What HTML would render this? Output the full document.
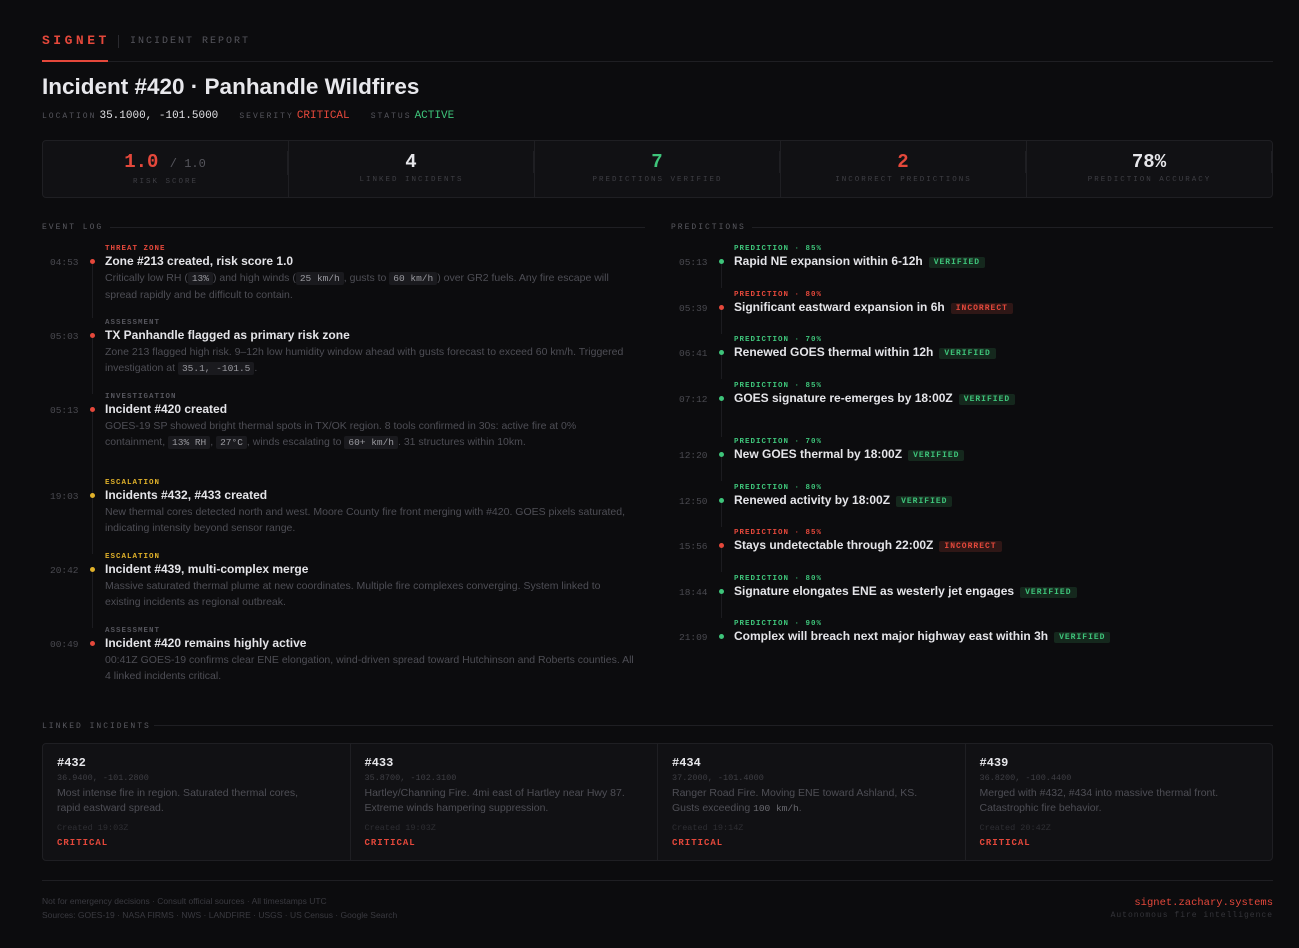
<!DOCTYPE html><html><head><meta charset="utf-8"><style>
*{margin:0;padding:0;box-sizing:border-box}
body{width:1299px;height:948px;background:#0c0c0e;color:#e6e6ea;font-family:"Liberation Sans",sans-serif;position:relative;overflow:hidden}
.m{font-family:"Liberation Mono",monospace}
.a{position:absolute;white-space:nowrap}
.red{color:#e5483b}.grn{color:#3ec47a}.yel{color:#e0b12a}
.lbl{font-family:"Liberation Mono",monospace;font-size:8px;letter-spacing:2px;color:#55555c}
.sec{position:absolute;font-family:"Liberation Mono",monospace;font-size:8px;letter-spacing:2px;color:#5a5a60}
.hl{position:absolute;height:1px;background:#1f1f23}
.stats{position:absolute;left:42px;top:140px;width:1231px;height:58px;border:1px solid #1f1f23;border-radius:4px;background:#111114;display:flex}
.stats div{flex:1;border-right:1px solid #1f1f23;text-align:center;position:relative}
.stats div:last-child{border-right:none}
.sv{font-family:"Liberation Mono",monospace;font-size:19px;font-weight:bold;margin-top:10px;line-height:22px}
.sl{font-family:"Liberation Mono",monospace;font-size:7.5px;letter-spacing:2px;color:#3f3f45;margin-top:3px}
.ev{position:absolute;left:42px;width:600px}
.ev .t{position:absolute;left:8px;font-family:"Liberation Mono",monospace;font-size:9.5px;color:#4a4a50}
.ev .d{position:absolute;left:48px;width:5px;height:5px;border-radius:50%}
.ev .c{position:absolute;left:63px;font-family:"Liberation Mono",monospace;font-size:7.5px;font-weight:bold;letter-spacing:1px}
.ev .h{position:absolute;left:63px;font-size:12px;font-weight:bold;color:#e4e4e8;white-space:nowrap}
.ev .p{position:absolute;left:63px;width:530px;font-size:10.5px;line-height:16px;color:#4e4e55}
.ev .ln{position:absolute;left:50px;width:1px;background:#1c1c20}
code{font-family:"Liberation Mono",monospace;font-size:9.5px;background:#1a1a1e;color:#9a9aa0;padding:1px 4px;border-radius:2px}
.bd{font-family:"Liberation Mono",monospace;font-size:8px;font-weight:bold;letter-spacing:1px;padding:1px 5px;border-radius:2px;margin-left:6px;vertical-align:1px}
.bv{background:#15281d;color:#3ec47a}.bi{background:#2f1716;color:#e5483b}
.cards{position:absolute;left:42px;top:743px;width:1231px;height:118px;border:1px solid #1f1f23;border-radius:4px;background:#111114;display:flex}
.cards>div{flex:1;border-right:1px solid #1f1f23;padding:12px 14px;position:relative}
.cards>div:last-child{border-right:none}
.cn{font-family:"Liberation Mono",monospace;font-size:12px;font-weight:bold;color:#e6e6ea}
.cc{font-family:"Liberation Mono",monospace;font-size:8.5px;color:#3f3f45;margin-top:3px}
.cd{font-size:10.5px;line-height:15px;color:#4e4e55;margin-top:3px;width:262px}
.ct{position:absolute;top:79px;left:14px;font-family:"Liberation Mono",monospace;font-size:8.5px;color:#2e2e33}
.cs{position:absolute;top:94px;left:14px;font-family:"Liberation Mono",monospace;font-size:9px;font-weight:bold;letter-spacing:1px;color:#e5483b}
</style></head><body>
<div class="a m red" style="left:42px;top:33px;font-size:13px;font-weight:bold;letter-spacing:3.5px">SIGNET</div>
<div class="a" style="left:118px;top:35px;width:1px;height:13px;background:#2a2a2f"></div>
<div class="a m" style="left:130px;top:36px;font-size:10px;letter-spacing:2px;color:#55555c">INCIDENT REPORT</div>
<div class="hl" style="left:42px;top:61px;width:1231px;background:#1f1f23"></div>
<div class="a" style="left:42px;top:60px;width:66px;height:2px;background:#e5483b"></div>
<div class="a" style="left:42px;top:74px;font-size:22.5px;font-weight:bold;color:#e8e8ec">Incident #420 · Panhandle Wildfires</div>
<div class="a" style="left:42px;top:109px;font-size:11px">
<span class="lbl">LOCATION</span> <span class="m" style="color:#e0e0e4;font-size:11px">35.1000, -101.5000</span>
<span class="lbl" style="margin-left:18px">SEVERITY</span> <span class="m red" style="font-size:11px">CRITICAL</span>
<span class="lbl" style="margin-left:18px">STATUS</span> <span class="m grn" style="font-size:11px">ACTIVE</span></div>
<div class="stats">
<div><div class="sv red">1.0 <span style="color:#55555c;font-size:12px;font-weight:normal">/ 1.0</span></div><div class="sl">RISK SCORE</div></div>
<div><div class="sv" style="color:#e6e6ea">4</div><div class="sl">LINKED INCIDENTS</div></div>
<div><div class="sv grn">7</div><div class="sl">PREDICTIONS VERIFIED</div></div>
<div><div class="sv red">2</div><div class="sl">INCORRECT PREDICTIONS</div></div>
<div><div class="sv" style="color:#e6e6ea">78%</div><div class="sl">PREDICTION ACCURACY</div></div>
</div>
<div class="sec" style="left:42px;top:223px">EVENT LOG</div>
<div class="hl" style="left:110px;top:227px;width:535px"></div>
<div class="sec" style="left:671px;top:223px">PREDICTIONS</div>
<div class="hl" style="left:752px;top:227px;width:521px"></div>

<div class="ev" style="top:244px;height:74px"><div class="ln" style="top:20px;height:54px"></div>
<div class="c red" style="top:1px">THREAT ZONE</div><div class="t" style="top:13px">04:53</div><div class="d" style="background:#e5483b;top:15px"></div>
<div class="h" style="top:10px">Zone #213 created, risk score 1.0</div>
<div class="p" style="top:26px">Critically low RH (<code>13%</code>) and high winds (<code>25 km/h</code>, gusts to <code>60 km/h</code>) over GR2 fuels. Any fire escape will spread rapidly and be difficult to contain.</div></div>
<div class="ev" style="top:318px;height:74px"><div class="ln" style="top:20px;height:56px"></div>
<div class="c" style="top:1px;color:#55555c">ASSESSMENT</div><div class="t" style="top:13px">05:03</div><div class="d" style="background:#e5483b;top:15px"></div>
<div class="h" style="top:10px">TX Panhandle flagged as primary risk zone</div>
<div class="p" style="top:26px">Zone 213 flagged high risk. 9–12h low humidity window ahead with gusts forecast to exceed 60 km/h. Triggered investigation at <code>35.1, -101.5</code>.</div></div>
<div class="ev" style="top:392px;height:86px"><div class="ln" style="top:20px;height:86px"></div>
<div class="c" style="top:1px;color:#55555c">INVESTIGATION</div><div class="t" style="top:13px">05:13</div><div class="d" style="background:#e5483b;top:15px"></div>
<div class="h" style="top:10px">Incident #420 created</div>
<div class="p" style="top:26px">GOES-19 SP showed bright thermal spots in TX/OK region. 8 tools confirmed in 30s: active fire at 0% containment, <code>13% RH</code>, <code>27°C</code>, winds escalating to <code>60+ km/h</code>. 31 structures within 10km.</div></div>
<div class="ev" style="top:478px;height:74px"><div class="ln" style="top:20px;height:56px"></div>
<div class="c yel" style="top:1px">ESCALATION</div><div class="t" style="top:13px">19:03</div><div class="d" style="background:#e0b12a;top:15px"></div>
<div class="h" style="top:10px">Incidents #432, #433 created</div>
<div class="p" style="top:26px">New thermal cores detected north and west. Moore County fire front merging with #420. GOES pixels saturated, indicating intensity beyond sensor range.</div></div>
<div class="ev" style="top:552px;height:74px"><div class="ln" style="top:20px;height:56px"></div>
<div class="c yel" style="top:1px">ESCALATION</div><div class="t" style="top:13px">20:42</div><div class="d" style="background:#e0b12a;top:15px"></div>
<div class="h" style="top:10px">Incident #439, multi-complex merge</div>
<div class="p" style="top:26px">Massive saturated thermal plume at new coordinates. Multiple fire complexes converging. System linked to existing incidents as regional outbreak.</div></div>
<div class="ev" style="top:626px;height:74px">
<div class="c" style="top:1px;color:#55555c">ASSESSMENT</div><div class="t" style="top:13px">00:49</div><div class="d" style="background:#e5483b;top:15px"></div>
<div class="h" style="top:10px">Incident #420 remains highly active</div>
<div class="p" style="top:26px">00:41Z GOES-19 confirms clear ENE elongation, wind-driven spread toward Hutchinson and Roberts counties. All 4 linked incidents critical.</div></div>

<div class="ev" style="left:671px;top:244px"><div class="ln" style="top:20px;height:24px"></div><div class="c grn" style="top:1px">PREDICTION · 85%</div><div class="t" style="top:13px">05:13</div><div class="d" style="background:#3ec47a;top:15px"></div><div class="h" style="top:10px">Rapid NE expansion within 6-12h<span class="bd bv">VERIFIED</span></div></div>
<div class="ev" style="left:671px;top:290px"><div class="ln" style="top:20px;height:24px"></div><div class="c red" style="top:1px">PREDICTION · 80%</div><div class="t" style="top:13px">05:39</div><div class="d" style="background:#e5483b;top:15px"></div><div class="h" style="top:10px">Significant eastward expansion in 6h<span class="bd bi">INCORRECT</span></div></div>
<div class="ev" style="left:671px;top:335px"><div class="ln" style="top:20px;height:24px"></div><div class="c grn" style="top:1px">PREDICTION · 70%</div><div class="t" style="top:13px">06:41</div><div class="d" style="background:#3ec47a;top:15px"></div><div class="h" style="top:10px">Renewed GOES thermal within 12h<span class="bd bv">VERIFIED</span></div></div>
<div class="ev" style="left:671px;top:381px"><div class="ln" style="top:20px;height:36px"></div><div class="c grn" style="top:1px">PREDICTION · 85%</div><div class="t" style="top:13px">07:12</div><div class="d" style="background:#3ec47a;top:15px"></div><div class="h" style="top:10px">GOES signature re-emerges by 18:00Z<span class="bd bv">VERIFIED</span></div></div>
<div class="ev" style="left:671px;top:437px"><div class="ln" style="top:20px;height:24px"></div><div class="c grn" style="top:1px">PREDICTION · 70%</div><div class="t" style="top:13px">12:20</div><div class="d" style="background:#3ec47a;top:15px"></div><div class="h" style="top:10px">New GOES thermal by 18:00Z<span class="bd bv">VERIFIED</span></div></div>
<div class="ev" style="left:671px;top:483px"><div class="ln" style="top:20px;height:24px"></div><div class="c grn" style="top:1px">PREDICTION · 80%</div><div class="t" style="top:13px">12:50</div><div class="d" style="background:#3ec47a;top:15px"></div><div class="h" style="top:10px">Renewed activity by 18:00Z<span class="bd bv">VERIFIED</span></div></div>
<div class="ev" style="left:671px;top:528px"><div class="ln" style="top:20px;height:24px"></div><div class="c red" style="top:1px">PREDICTION · 85%</div><div class="t" style="top:13px">15:56</div><div class="d" style="background:#e5483b;top:15px"></div><div class="h" style="top:10px">Stays undetectable through 22:00Z<span class="bd bi">INCORRECT</span></div></div>
<div class="ev" style="left:671px;top:574px"><div class="ln" style="top:20px;height:24px"></div><div class="c grn" style="top:1px">PREDICTION · 80%</div><div class="t" style="top:13px">18:44</div><div class="d" style="background:#3ec47a;top:15px"></div><div class="h" style="top:10px">Signature elongates ENE as westerly jet engages<span class="bd bv">VERIFIED</span></div></div>
<div class="ev" style="left:671px;top:619px"><div class="c grn" style="top:1px">PREDICTION · 90%</div><div class="t" style="top:13px">21:09</div><div class="d" style="background:#3ec47a;top:15px"></div><div class="h" style="top:10px">Complex will breach next major highway east within 3h<span class="bd bv">VERIFIED</span></div></div>

<div class="sec" style="left:42px;top:722px">LINKED INCIDENTS</div>
<div class="hl" style="left:154px;top:725px;width:1119px"></div>
<div class="cards">
<div><div class="cn">#432</div><div class="cc">36.9400, -101.2800</div><div class="cd">Most intense fire in region. Saturated thermal cores, rapid eastward spread.</div><div class="ct">Created 19:03Z</div><div class="cs">CRITICAL</div></div>
<div><div class="cn">#433</div><div class="cc">35.8700, -102.3100</div><div class="cd">Hartley/Channing Fire. 4mi east of Hartley near Hwy 87. Extreme winds hampering suppression.</div><div class="ct">Created 19:03Z</div><div class="cs">CRITICAL</div></div>
<div><div class="cn">#434</div><div class="cc">37.2000, -101.4000</div><div class="cd">Ranger Road Fire. Moving ENE toward Ashland, KS. Gusts exceeding <code style="background:none;padding:0;color:#6a6a70">100 km/h</code>.</div><div class="ct">Created 19:14Z</div><div class="cs">CRITICAL</div></div>
<div><div class="cn">#439</div><div class="cc">36.8200, -100.4400</div><div class="cd">Merged with #432, #434 into massive thermal front. Catastrophic fire behavior.</div><div class="ct">Created 20:42Z</div><div class="cs">CRITICAL</div></div>
</div>
<div class="hl" style="left:42px;top:880px;width:1231px"></div>
<div class="a" style="left:42px;top:896px;font-size:8.5px;color:#3a3a40">Not for emergency decisions · Consult official sources · All timestamps UTC</div>
<div class="a" style="left:42px;top:910px;font-size:8.5px;color:#3a3a40">Sources: GOES-19 · NASA FIRMS · NWS · LANDFIRE · USGS · US Census · Google Search</div>
<div class="a m red" style="right:26px;top:897px;font-size:10.5px">signet.zachary.systems</div>
<div class="a m" style="right:26px;top:911px;font-size:8px;letter-spacing:1px;color:#35353a">Autonomous fire intelligence</div>
</body></html>
